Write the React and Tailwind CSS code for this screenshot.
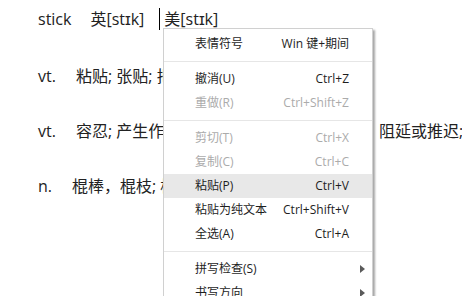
import React from 'react'

const font = { fontFamily: '"Open Sans", "Noto Sans CJK SC", sans-serif' }

const menuItems = [
    { label: '表情符号', shortcut: 'Win 键+期间' },
    { sep: true },
    { label: '撤消(U)', shortcut: 'Ctrl+Z' },
    { label: '重做(R)', shortcut: 'Ctrl+Shift+Z', disabled: true },
    { sep: true },
    { label: '剪切(T)', shortcut: 'Ctrl+X', disabled: true },
    { label: '复制(C)', shortcut: 'Ctrl+C', disabled: true },
    { label: '粘贴(P)', shortcut: 'Ctrl+V', active: true },
    { label: '粘贴为纯文本', shortcut: 'Ctrl+Shift+V' },
    { label: '全选(A)', shortcut: 'Ctrl+A' },
    { sep: true },
    { label: '拼写检查(S)', arrow: true },
    { label: '书写方向', arrow: true },
]

const Arrow = () => (
    <svg width="5" height="8" viewBox="0 0 5 8">
        <path d="M0 0 L5 4 L0 8 Z" fill="#5a5a5a" />
    </svg>
)

const ContextMenu = () => {
    return (
        <div className="absolute left-[163px] top-[28px] w-[210px] bg-white border border-[#d0d0d0] pt-[3px] pb-1 shadow-[2px_2px_2px_rgba(0,0,0,0.35)] text-[12px]">
            {menuItems.map((item, i) =>
                item.sep ? (
                    <div key={'sep_' + i} className="my-[5px] h-px bg-[#e6e6e6]"></div>
                ) : (
                    <div
                        key={'item_' + i}
                        className={
                            'flex items-center h-6 pl-[31px] pr-[7px] ' +
                            (item.active ? 'bg-[#e8e8e8] ' : '') +
                            (item.disabled ? 'text-[#ababab]' : 'text-[#1e1e1e]')
                        }
                    >
                        <span className="flex-1 whitespace-nowrap">{item.label}</span>
                        {item.shortcut && <span className="whitespace-nowrap">{item.shortcut}</span>}
                        <span className="w-[16px] flex justify-end">{item.arrow && <Arrow />}</span>
                    </div>
                )
            )}
        </div>
    )
}

const App = () => {
    return (
        <div className="relative w-[462px] h-[296px] overflow-hidden bg-white text-[#222] text-[16px]" style={font}>
            <div className="pl-[38px] pt-[7px] whitespace-nowrap">
                <div className="flex items-center h-6">
                    <span className="shrink-0">stick</span>
                    <span className="shrink-0 ml-[19px]">英[stɪk]</span>
                    <span className="shrink-0 ml-[15px] mr-[4px] w-px h-[22px] bg-black"></span>
                    <span className="shrink-0">美[stɪk]</span>
                </div>

                <div className="flex items-center h-6 mt-[33px]">
                    <span className="shrink-0 w-[38px]">vt.</span>
                    <span className="shrink-0">粘贴; 张贴; 把…钉住; 刺; 戳入</span>
                </div>

                <div className="flex items-center h-6 mt-[31px]">
                    <span className="shrink-0 w-[38px]">vt.</span>
                    <span className="shrink-0 w-[303px] overflow-hidden">容忍; 产生作用; 使困住; 使</span>
                    <span className="shrink-0">阻延或推迟; 使陷入困境</span>
                </div>

                <div className="flex items-center h-6 mt-[31px]">
                    <span className="shrink-0 w-[34px]">n.</span>
                    <span className="shrink-0">棍棒，棍枝; 枝条; 手杖</span>
                </div>
            </div>

            <ContextMenu />
        </div>
    )
}

export default App
